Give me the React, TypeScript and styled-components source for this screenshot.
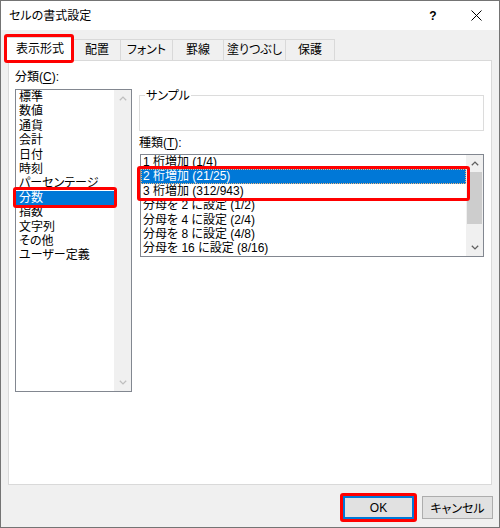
import styled, { createGlobalStyle } from 'styled-components';

const GlobalStyle = createGlobalStyle`
  body {
    margin: 0;
    background: #fff;
    font-family: 'Liberation Sans', 'Noto Sans CJK JP', sans-serif;
    font-feature-settings: 'palt';
  }
`;

const categories = [
  '標準',
  '数値',
  '通貨',
  '会計',
  '日付',
  '時刻',
  'パーセンテージ',
  '分数',
  '指数',
  '文字列',
  'その他',
  'ユーザー定義',
];

const tabs = [
  { label: '表示形式', width: 68 },
  { label: '配置', width: 48 },
  { label: 'フォント', width: 53 },
  { label: '罫線', width: 52 },
  { label: '塗りつぶし', width: 63 },
  { label: '保護', width: 50 },
];

const Dialog = styled.div`
  width: 500px;
  height: 528px;
  box-sizing: border-box;
  border: 1px solid #747474;
  background: #f0f0f0;
  display: flex;
  flex-direction: column;
  color: #000;
  font-size: 12px;
`;

const TitleBar = styled.div`
  height: 29px;
  background: #fff;
  display: flex;
  align-items: center;
  padding-left: 8px;
`;

const TitleText = styled.span`
  line-height: 16px;
  flex: 1;
`;

const TitleButton = styled.div<{ $width: number }>`
  width: ${(p) => p.$width}px;
  height: 29px;
  display: flex;
  align-items: center;
  justify-content: center;
  font-weight: 700;
  font-size: 12px;
`;

const TabStrip = styled.div`
  height: 30px;
  display: flex;
  align-items: flex-end;
  padding-left: 7px;
`;

const Tab = styled.div<{ $active?: boolean; $width: number }>`
  position: relative;
  box-sizing: border-box;
  width: ${(p) => p.$width}px;
  height: ${(p) => (p.$active ? 24 : 21)}px;
  margin-left: ${(p) => (p.$active ? -2 : -1)}px;
  margin-bottom: ${(p) => (p.$active ? -1 : 0)}px;
  border: 1px solid #d9d9d9;
  border-bottom: none;
  background: ${(p) => (p.$active ? '#fff' : '#f0f0f0')};
  z-index: ${(p) => (p.$active ? 2 : 1)};
  display: flex;
  align-items: center;
  justify-content: center;
  padding-bottom: ${(p) => (p.$active ? 2 : 0)}px;
  line-height: 16px;
`;

const Mark = styled.span<{ $t: number; $r: number; $b: number; $l: number }>`
  position: absolute;
  top: ${(p) => p.$t}px;
  right: ${(p) => p.$r}px;
  bottom: ${(p) => p.$b}px;
  left: ${(p) => p.$l}px;
  border: 3px solid #ff0000;
  border-radius: 3px;
  pointer-events: none;
  z-index: 5;
`;

const Panel = styled.div`
  height: 425px;
  margin: 0 7px;
  box-sizing: border-box;
  border: 1px solid #d9d9d9;
  background: #fff;
  padding: 8px 0 0 6px;
  display: grid;
  grid-template-columns: 117px 345px;
  column-gap: 7px;
  align-items: start;
`;

const Column = styled.div<{ $top?: number }>`
  display: flex;
  flex-direction: column;
  margin-top: ${(p) => p.$top ?? 0}px;
`;

const FieldLabel = styled.div<{ $gap: number }>`
  line-height: 16px;
  margin-bottom: ${(p) => p.$gap}px;
  u {
    text-underline-offset: 2px;
  }
`;

const ListBox = styled.div<{ $height: number; $indent?: number }>`
  box-sizing: border-box;
  height: ${(p) => p.$height}px;
  margin-left: ${(p) => p.$indent ?? 0}px;
  border: 1px solid #828790;
  display: flex;
  background: #fff;
`;

const ListItems = styled.div`
  flex: 1;
  display: flex;
  flex-direction: column;
`;

const RowGroup = styled.div`
  position: relative;
  display: flex;
  flex-direction: column;
`;

const ListRow = styled.div<{ $selected?: boolean; $focus?: boolean; $pad: number }>`
  position: relative;
  box-sizing: border-box;
  height: 14.4px;
  line-height: 14px;
  padding-left: ${(p) => p.$pad}px;
  white-space: nowrap;
  background: ${(p) => (p.$selected ? '#0078d7' : 'transparent')};
  color: ${(p) => (p.$selected ? '#fff' : '#000')};
  outline: ${(p) => (p.$focus ? '1px dotted #f2b57a' : 'none')};
  outline-offset: -1px;
`;

const ScrollBar = styled.div`
  width: 17px;
  background: #f0f0f0;
  display: flex;
  flex-direction: column;
`;

const ScrollButton = styled.div<{ $disabled?: boolean }>`
  height: 17px;
  display: flex;
  align-items: center;
  justify-content: center;
  color: ${(p) => (p.$disabled ? '#bfbfbf' : '#606060')};
`;

const ScrollTrack = styled.div`
  flex: 1;
  display: flex;
  flex-direction: column;
`;

const Thumb = styled.div<{ $height: number }>`
  height: ${(p) => p.$height}px;
  margin: 0 1px;
  background: #cdcdcd;
`;

const GroupBox = styled.div`
  position: relative;
  box-sizing: border-box;
  height: 36px;
  width: 345px;
  border: 1px solid #dcdcdc;
  margin-bottom: 4px;
`;

const GroupLegend = styled.span`
  position: absolute;
  top: -8px;
  left: 5px;
  padding: 0 1px;
  background: #fff;
  line-height: 16px;
`;

const Footer = styled.div`
  flex: 1;
  display: flex;
  justify-content: flex-end;
  align-items: flex-start;
  gap: 8px;
  padding: 11px 6px 0 0;
`;

const Button = styled.button<{ $default?: boolean }>`
  position: relative;
  box-sizing: border-box;
  width: 71px;
  height: 23px;
  padding: 0;
  font: inherit;
  font-size: 12px;
  color: #000;
  background: #e1e1e1;
  border: 1px solid ${(p) => (p.$default ? '#0078d7' : '#adadad')};
  box-shadow: ${(p) => (p.$default ? 'inset 0 0 0 1px #0078d7' : 'none')};
`;

const Chevron = ({ up }: { up?: boolean }) => (
  <svg width="8" height="5" viewBox="0 0 8 5">
    <polyline
      points={up ? '0.8,4.3 4,1.1 7.2,4.3' : '0.8,0.7 4,3.9 7.2,0.7'}
      fill="none"
      stroke="currentColor"
      strokeWidth="1.3"
    />
  </svg>
);

const CloseIcon = () => (
  <svg width="11" height="11" viewBox="0 0 11 11">
    <path d="M0.5 0.5 L10.5 10.5 M10.5 0.5 L0.5 10.5" stroke="#000" strokeWidth="1" />
  </svg>
);

const Scroller = ({ disabled, thumb }: { disabled?: boolean; thumb?: number }) => (
  <ScrollBar>
    <ScrollButton $disabled={disabled}>
      <Chevron up />
    </ScrollButton>
    <ScrollTrack>{thumb ? <Thumb $height={thumb} /> : null}</ScrollTrack>
    <ScrollButton $disabled={disabled}>
      <Chevron />
    </ScrollButton>
  </ScrollBar>
);

export default function App() {
  return (
    <>
      <GlobalStyle />
      <Dialog>
        <TitleBar>
          <TitleText>セルの書式設定</TitleText>
          <TitleButton $width={40}>?</TitleButton>
          <TitleButton $width={46}>
            <CloseIcon />
          </TitleButton>
        </TitleBar>

        <TabStrip>
          {tabs.map((t, i) => (
            <Tab key={t.label} $active={i === 0} $width={t.width}>
              {t.label}
              {i === 0 && <Mark $t={-4} $r={-1} $b={-2} $l={-3} />}
            </Tab>
          ))}
        </TabStrip>

        <Panel>
          <Column>
            <FieldLabel $gap={4}>
              分類(<u>C</u>):
            </FieldLabel>
            <ListBox $height={303}>
              <ListItems>
                {categories.map((c) => (
                  <ListRow key={c} $pad={3} $selected={c === '分数'}>
                    {c}
                    {c === '分数' && <Mark $t={-4} $r={-3} $b={-3} $l={-3} />}
                  </ListRow>
                ))}
              </ListItems>
              <Scroller disabled />
            </ListBox>
          </Column>

          <Column $top={26}>
            <GroupBox>
              <GroupLegend>サンプル</GroupLegend>
            </GroupBox>
            <FieldLabel $gap={3}>
              種類(<u>T</u>):
            </FieldLabel>
            <ListBox $height={103} $indent={1}>
              <ListItems>
                <ListRow $pad={2}>1 桁増加 (1/4)</ListRow>
                <RowGroup>
                  <ListRow $pad={2} $selected $focus>
                    2 桁増加 (21/25)
                  </ListRow>
                  <ListRow $pad={2}>3 桁増加 (312/943)</ListRow>
                  <Mark $t={-3} $r={-4} $b={-3} $l={-4} />
                </RowGroup>
                <ListRow $pad={2}>分母を 2 に設定 (1/2)</ListRow>
                <ListRow $pad={2}>分母を 4 に設定 (2/4)</ListRow>
                <ListRow $pad={2}>分母を 8 に設定 (4/8)</ListRow>
                <ListRow $pad={2}>分母を 16 に設定 (8/16)</ListRow>
              </ListItems>
              <Scroller thumb={52} />
            </ListBox>
          </Column>
        </Panel>

        <Footer>
          <Button $default>
            OK
            <Mark $t={-4} $r={-4} $b={-4} $l={-4} />
          </Button>
          <Button>キャンセル</Button>
        </Footer>
      </Dialog>
    </>
  );
}
